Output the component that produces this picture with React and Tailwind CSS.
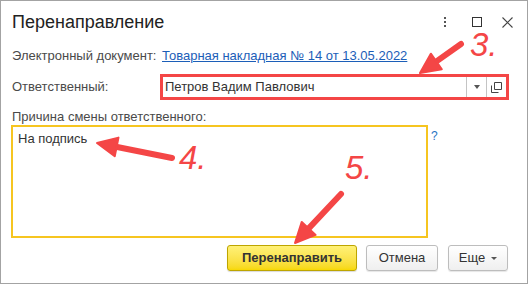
import React from "react";

const RED = "#f44646";

// arrow with a round tail and a wide triangle head
const Arrow = ({ from, to, head = 20, wide = 19, width = 6 }) => {
  const dx = to[0] - from[0];
  const dy = to[1] - from[1];
  const len = Math.hypot(dx, dy);
  const ux = dx / len;
  const uy = dy / len;
  const bx = to[0] - ux * head;
  const by = to[1] - uy * head;
  const nx = -uy * (wide / 2);
  const ny = ux * (wide / 2);
  const pts = `${to[0]},${to[1]} ${bx + nx},${by + ny} ${bx - nx},${by - ny}`;
  return (
    <g>
      <line x1={from[0]} y1={from[1]} x2={bx + ux * 2} y2={by + uy * 2} stroke={RED} strokeWidth={width} strokeLinecap="round" />
      <polygon points={pts} fill={RED} stroke={RED} strokeWidth="2" strokeLinejoin="round" />
    </g>
  );
};

const Mark = ({ children, className }) => (
  <span
    className={`absolute text-[33px] leading-[33px] italic text-[#f44646] ${className}`}
    style={{ fontFamily: '"Liberation Sans", Arial, sans-serif' }}
  >
    {children}
  </span>
);

export default function App() {
  return (
    <div
      className="relative w-[528px] h-[284px] bg-white border border-[#a3a3a3] text-[13px] text-[#4a4a4a]"
      style={{ fontFamily: '"Liberation Sans", Arial, sans-serif' }}
    >
      {/* Title bar */}
      <div className="flex items-center pt-[9px] pl-[11px] pr-[14px] h-[33px]">
        <h1 className="text-[18px] leading-6 text-[#222]">Перенаправление</h1>
        <div className="ml-auto flex items-center">
          <div className="flex flex-col gap-[2px] w-[4px] items-center">
            <span className="w-[2px] h-[2px] bg-[#555]" />
            <span className="w-[2px] h-[2px] bg-[#555]" />
            <span className="w-[2px] h-[2px] bg-[#555]" />
          </div>
          <span className="ml-[25px] w-[10px] h-[10px] border border-[#333]" />
          <svg className="ml-[20px]" width="11" height="11" viewBox="0 0 11 11">
            <path d="M0.5 0.5 L10.5 10.5 M10.5 0.5 L0.5 10.5" stroke="#444" strokeWidth="1.1" />
          </svg>
        </div>
      </div>

      <div className="px-[11px]">
        {/* Document row */}
        <div className="flex items-center mt-[14px] h-4 leading-4">
          <span className="w-[148px] shrink-0">Электронный документ:</span>
          <a href="#" className="ml-[2px] text-[#1c5eb8] underline">
            Товарная накладная № 14 от 13.05.2022
          </a>
        </div>

        {/* Responsible row */}
        <div className="flex items-center mt-[10px]">
          <span className="w-[148px] shrink-0 leading-4">Ответственный:</span>
          <div className="flex items-stretch w-[349px] h-[26px] border-[3px] border-[#f44646] bg-white">
            <span className="flex-1 pl-[2px] flex items-center text-[#333]">Петров Вадим Павлович</span>
            <span className="w-[20px] border-l border-[#c4c4c4] flex items-center justify-center">
              <span className="w-0 h-0 border-l-[3.5px] border-r-[3.5px] border-t-[4px] border-l-transparent border-r-transparent border-t-[#555]" />
            </span>
            <span className="w-[20px] border-l border-[#c4c4c4] flex items-center justify-center">
              <svg width="11" height="11" viewBox="0 0 11 11">
                <path d="M3.5 0.5 H10.5 V7.5 H3.5 Z M0.5 3.5 V10.5 H7.5" fill="none" stroke="#444" strokeWidth="1" />
              </svg>
            </span>
          </div>
        </div>

        {/* Reason */}
        <div className="mt-[9px] h-4 leading-4">Причина смены ответственного:</div>
        <div className="flex items-start -ml-[1px]">
          <div className="w-[417px] h-[113px] border-2 border-[#f6c520] px-[5px] pt-[4px] leading-4 text-[#333]">
            На подпись
          </div>
          <span className="ml-[3px] mt-[2px] text-[12px] text-[#2874c4]">?</span>
        </div>

        {/* Buttons */}
        <div className="flex justify-end gap-[9px] mt-[7px] pr-[8px]">
          <button className="w-[130px] h-[26px] rounded-[3px] border border-[#bda500] bg-gradient-to-b from-[#fff176] to-[#f7d800] font-bold text-[#333] shadow-[0_1px_1px_rgba(0,0,0,0.15)]">
            Перенаправить
          </button>
          <button className="w-[72px] h-[26px] rounded-[3px] border border-[#bdbdbd] bg-gradient-to-b from-white to-[#efefef] text-[#333] shadow-[0_1px_1px_rgba(0,0,0,0.1)]">
            Отмена
          </button>
          <button className="ml-[1px] w-[60px] h-[26px] rounded-[3px] border border-[#bdbdbd] bg-gradient-to-b from-white to-[#efefef] text-[#333] flex items-center justify-center gap-[6px] shadow-[0_1px_1px_rgba(0,0,0,0.1)]">
            Еще
            <span className="w-0 h-0 border-l-[3px] border-r-[3px] border-t-[3px] border-l-transparent border-r-transparent border-t-[#555]" />
          </button>
        </div>
      </div>

      {/* Annotations */}
      <svg className="absolute left-[-1px] top-[-1px] pointer-events-none" width="528" height="284">
        <Arrow from={[461, 44]} to={[420, 73]} />
        <Arrow from={[172, 158]} to={[97, 143]} />
        <Arrow from={[341, 194]} to={[295, 243]} />
      </svg>
      <Mark className="left-[469px] top-[27px]">3.</Mark>
      <Mark className="left-[178px] top-[140px]">4.</Mark>
      <Mark className="left-[344px] top-[150px]">5.</Mark>
    </div>
  );
}
